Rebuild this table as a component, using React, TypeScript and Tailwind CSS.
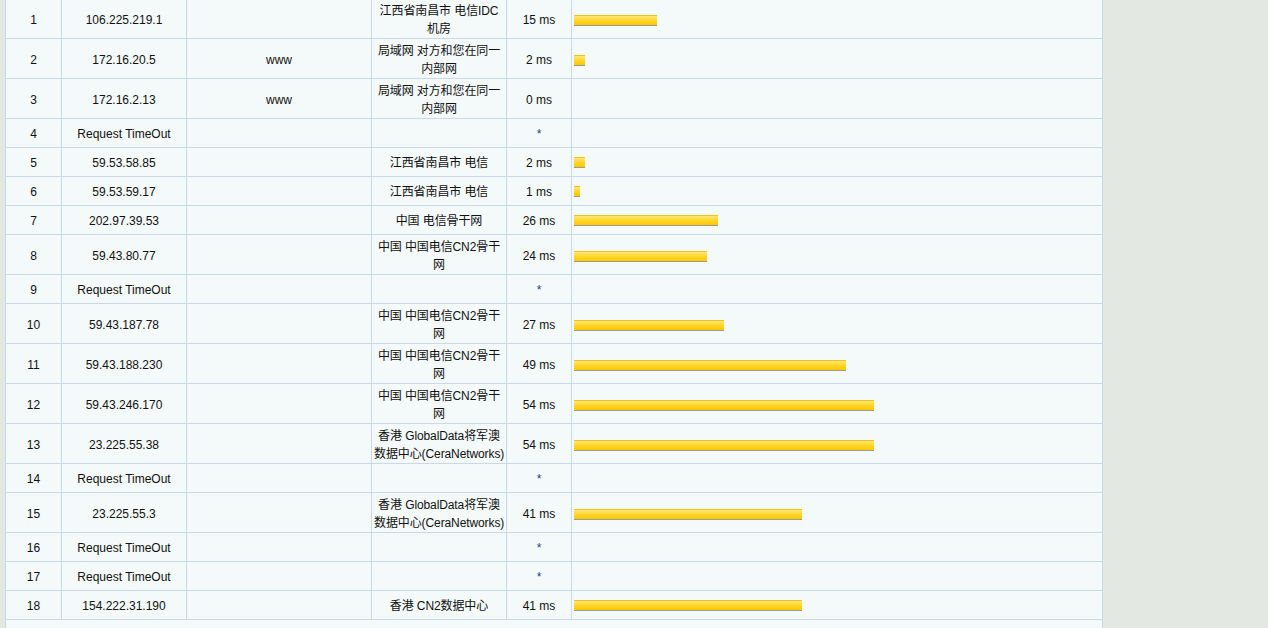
import React from "react";

interface Hop {
  no: number;
  ip: string;
  host: string;
  location: string[];
  ms: number | null;
}

const CN2 = ["中国 中国电信CN2骨干", "网"];
const GDATA = ["香港 GlobalData将军澳", "数据中心(CeraNetworks)"];
const LAN = ["局域网 对方和您在同一", "内部网"];

const hops: Hop[] = [
  { no: 1, ip: "106.225.219.1", host: "", location: ["江西省南昌市 电信IDC", "机房"], ms: 15 },
  { no: 2, ip: "172.16.20.5", host: "www", location: LAN, ms: 2 },
  { no: 3, ip: "172.16.2.13", host: "www", location: LAN, ms: 0 },
  { no: 4, ip: "Request TimeOut", host: "", location: [], ms: null },
  { no: 5, ip: "59.53.58.85", host: "", location: ["江西省南昌市 电信"], ms: 2 },
  { no: 6, ip: "59.53.59.17", host: "", location: ["江西省南昌市 电信"], ms: 1 },
  { no: 7, ip: "202.97.39.53", host: "", location: ["中国 电信骨干网"], ms: 26 },
  { no: 8, ip: "59.43.80.77", host: "", location: CN2, ms: 24 },
  { no: 9, ip: "Request TimeOut", host: "", location: [], ms: null },
  { no: 10, ip: "59.43.187.78", host: "", location: CN2, ms: 27 },
  { no: 11, ip: "59.43.188.230", host: "", location: CN2, ms: 49 },
  { no: 12, ip: "59.43.246.170", host: "", location: CN2, ms: 54 },
  { no: 13, ip: "23.225.55.38", host: "", location: GDATA, ms: 54 },
  { no: 14, ip: "Request TimeOut", host: "", location: [], ms: null },
  { no: 15, ip: "23.225.55.3", host: "", location: GDATA, ms: 41 },
  { no: 16, ip: "Request TimeOut", host: "", location: [], ms: null },
  { no: 17, ip: "Request TimeOut", host: "", location: [], ms: null },
  { no: 18, ip: "154.222.31.190", host: "", location: ["香港 CN2数据中心"], ms: 41 },
];

// 54 ms fills 300px
const barWidth = (ms: number) => Math.round((ms * 300) / 54);

const base = "border border-[#cbd8ec] px-[2px] text-center align-middle whitespace-nowrap";
const tallCell = `${base} h-[40px] pt-[3px] pb-0`;
const shortCell = `${base} h-[29px] pt-[1px] pb-0`;

export default function App() {
  return (
    <div
      className="min-h-screen bg-[#e3e8e2] text-[12px] leading-[18px] text-[#111]"
      style={{ fontFamily: '"Liberation Sans", "Noto Sans CJK SC", sans-serif' }}
    >
      <table className="-mt-[2px] ml-[5px] w-[1097px] table-fixed border-collapse bg-[#f4f9f9]">
        <colgroup>
          <col className="w-[56px]" />
          <col className="w-[125px]" />
          <col className="w-[185px]" />
          <col className="w-[135px]" />
          <col className="w-[65px]" />
          <col className="w-[531px]" />
        </colgroup>
        <tbody>
          {hops.map((hop) => {
            const cell = hop.location.length > 1 ? tallCell : shortCell;
            return (
              <tr key={hop.no}>
                <td className={cell}>{hop.no}</td>
                <td className={cell}>{hop.ip}</td>
                <td className={cell}>{hop.host}</td>
                <td className={`${cell} tracking-[-0.1px]`}>
                  {hop.location.map((line, i) => (
                    <div key={i}>{line}</div>
                  ))}
                </td>
                <td className={cell}>
                  {hop.ms === null ? (
                    <span className="text-[#2a3a8a]">*</span>
                  ) : (
                    `${hop.ms} ms`
                  )}
                </td>
                <td className={`${cell} !text-left`}>
                  {hop.ms ? (
                    <div
                      className="h-[11px] border-t border-t-[#f2c411] border-b border-b-[#9a9a9a] bg-[linear-gradient(#ffe77a,#ffd422_55%,#ffc800)]"
                      style={{ width: barWidth(hop.ms) }}
                    />
                  ) : null}
                </td>
              </tr>
            );
          })}
          {/* footer row spanning the full table */}
          <tr>
            <td colSpan={6} className={shortCell} />
          </tr>
        </tbody>
      </table>
    </div>
  );
}
